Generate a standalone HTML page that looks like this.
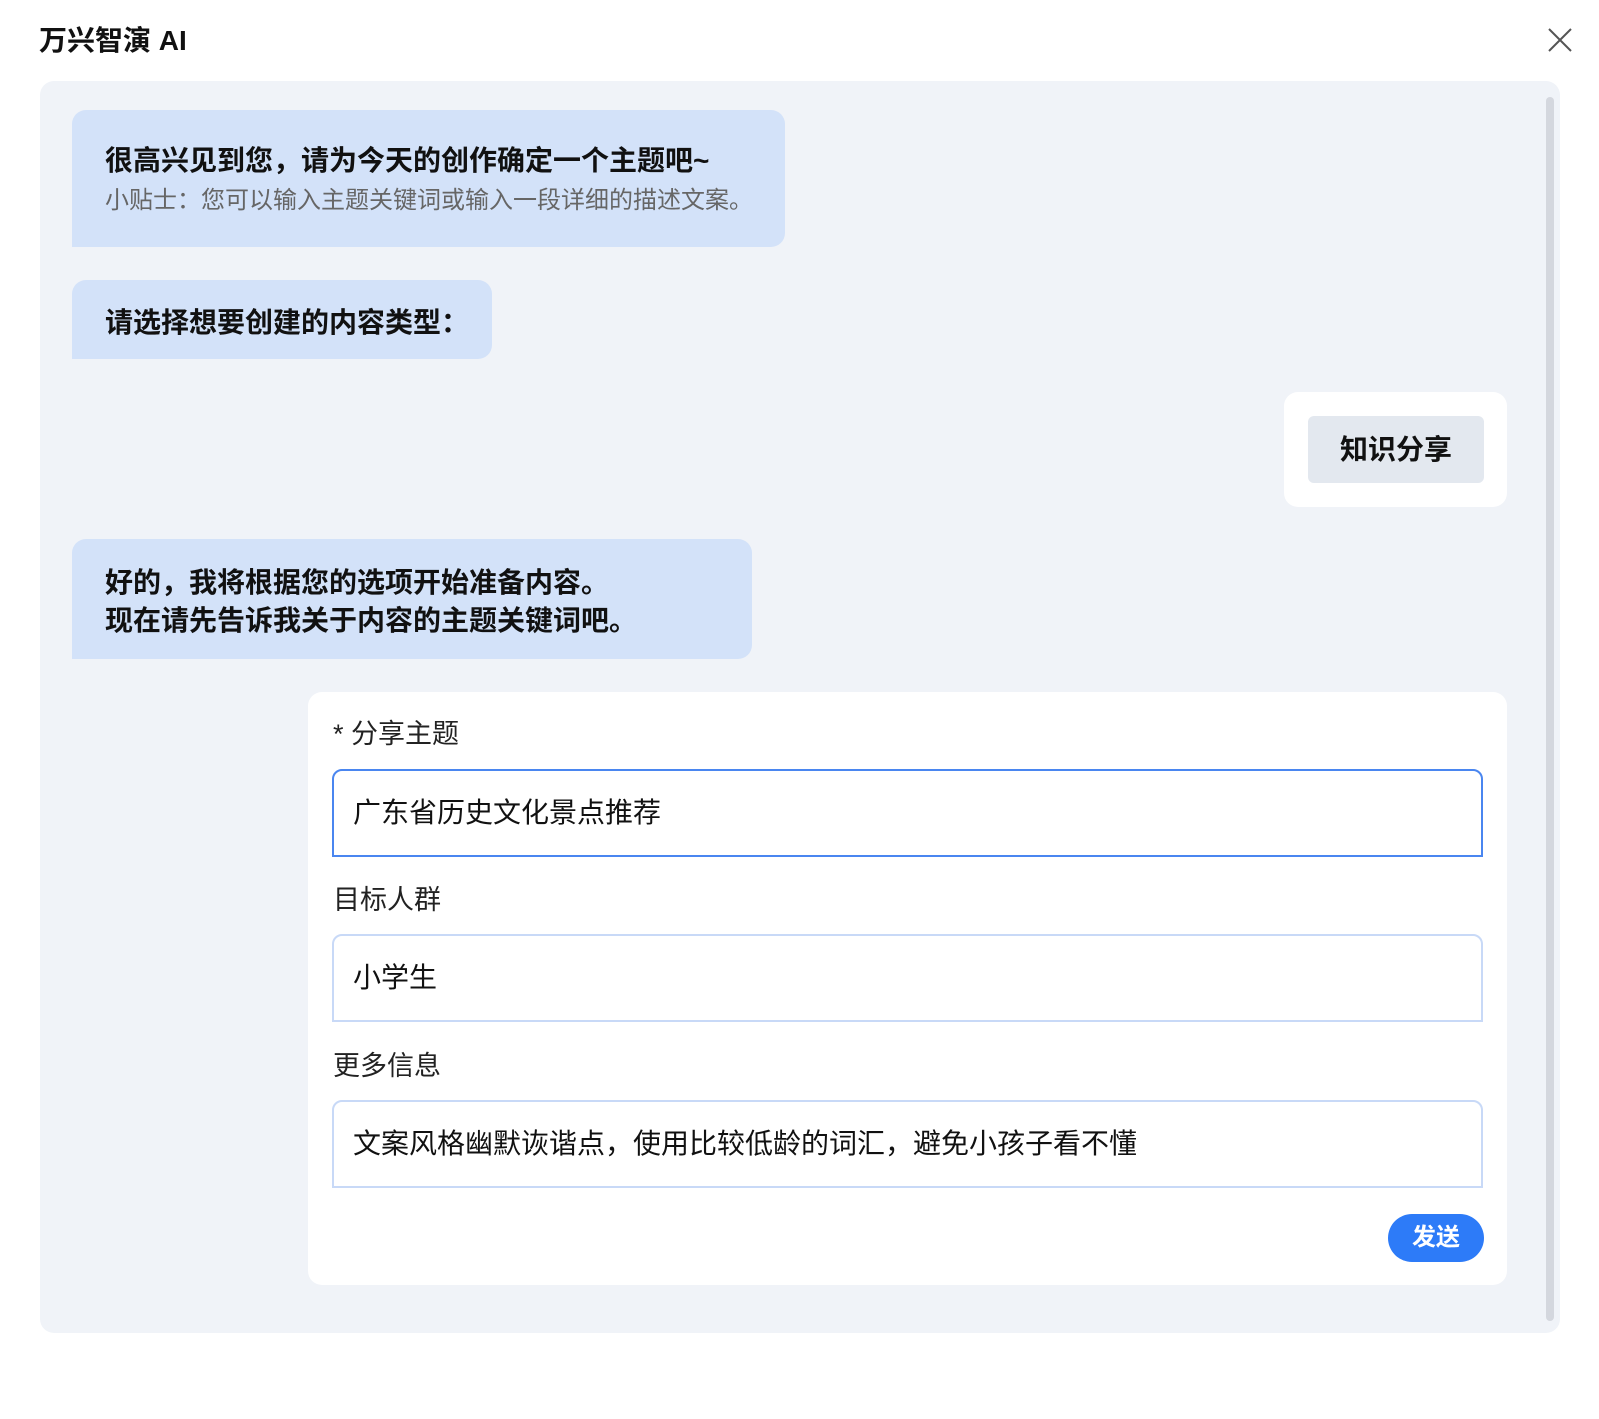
<!DOCTYPE html>
<html><head><meta charset="utf-8"><style>
*{margin:0;padding:0;box-sizing:border-box}
body{width:1599px;height:1419px;background:#fff;position:relative;overflow:hidden;font-family:"Liberation Sans","Noto Sans CJK SC",sans-serif;color:#111}
.a{position:absolute;white-space:nowrap}
.title{left:39px;top:23px;font-size:28px;font-weight:bold;line-height:36px}
.wrap{left:40px;top:81px;width:1520px;height:1252px;background:#f0f3f8;border-radius:14px}
.sb{left:1546px;top:97px;width:8px;height:1224px;background:#d4d7de;border-radius:4px}
.bub{background:#d3e2f9;border-radius:14px 14px 14px 0}
.bt{font-size:28px;font-weight:bold;line-height:38px}
.lab{font-size:27px;line-height:34px;color:#222}
.inp{left:332px;width:1151px;height:88px;border:2px solid #c8d9f7;border-radius:10px 10px 0 0;background:#fff;font-size:28px;line-height:84px;padding-left:19px;color:#111}
</style></head><body>
<div class="a title">万兴智演 AI</div>
<svg class="a" style="left:1547px;top:27px" width="26" height="26" viewBox="0 0 26 26"><path d="M2 2L24 24M24 2L2 24" stroke="#555" stroke-width="2" fill="none"/></svg>
<div class="a wrap"></div>
<div class="a sb"></div>
<div class="a bub" style="left:72px;top:110px;width:713px;height:137px"></div>
<div class="a bt" style="left:105px;top:142px">很高兴见到您，请为今天的创作确定一个主题吧~</div>
<div class="a" style="left:105px;top:185px;font-size:24px;line-height:32px;color:#666">小贴士：您可以输入主题关键词或输入一段详细的描述文案。</div>
<div class="a bub" style="left:72px;top:280px;width:420px;height:79px"></div>
<div class="a bt" style="left:105px;top:304px">请选择想要创建的内容类型：</div>
<div class="a" style="left:1284px;top:392px;width:223px;height:115px;background:#fff;border-radius:14px"></div>
<div class="a" style="left:1308px;top:416px;width:176px;height:67px;background:#e3e8ef;border-radius:6px;font-size:28px;font-weight:bold;text-align:center;line-height:67px">知识分享</div>
<div class="a bub" style="left:72px;top:539px;width:680px;height:120px"></div>
<div class="a bt" style="left:105px;top:564px">好的，我将根据您的选项开始准备内容。<br>现在请先告诉我关于内容的主题关键词吧。</div>
<div class="a" style="left:308px;top:692px;width:1199px;height:593px;background:#fff;border-radius:14px"></div>
<div class="a lab" style="left:333px;top:717px">* 分享主题</div>
<div class="a inp" style="top:769px;border-color:#4a86f0">广东省历史文化景点推荐</div>
<div class="a lab" style="left:333px;top:883px">目标人群</div>
<div class="a inp" style="top:934px">小学生</div>
<div class="a lab" style="left:333px;top:1049px">更多信息</div>
<div class="a inp" style="top:1100px">文案风格幽默诙谐点，使用比较低龄的词汇，避免小孩子看不懂</div>
<div class="a" style="left:1388px;top:1214px;width:96px;height:48px;background:#2d7bf8;border-radius:24px;color:#fff;font-size:24px;font-weight:bold;text-align:center;line-height:48px">发送</div>
</body></html>
